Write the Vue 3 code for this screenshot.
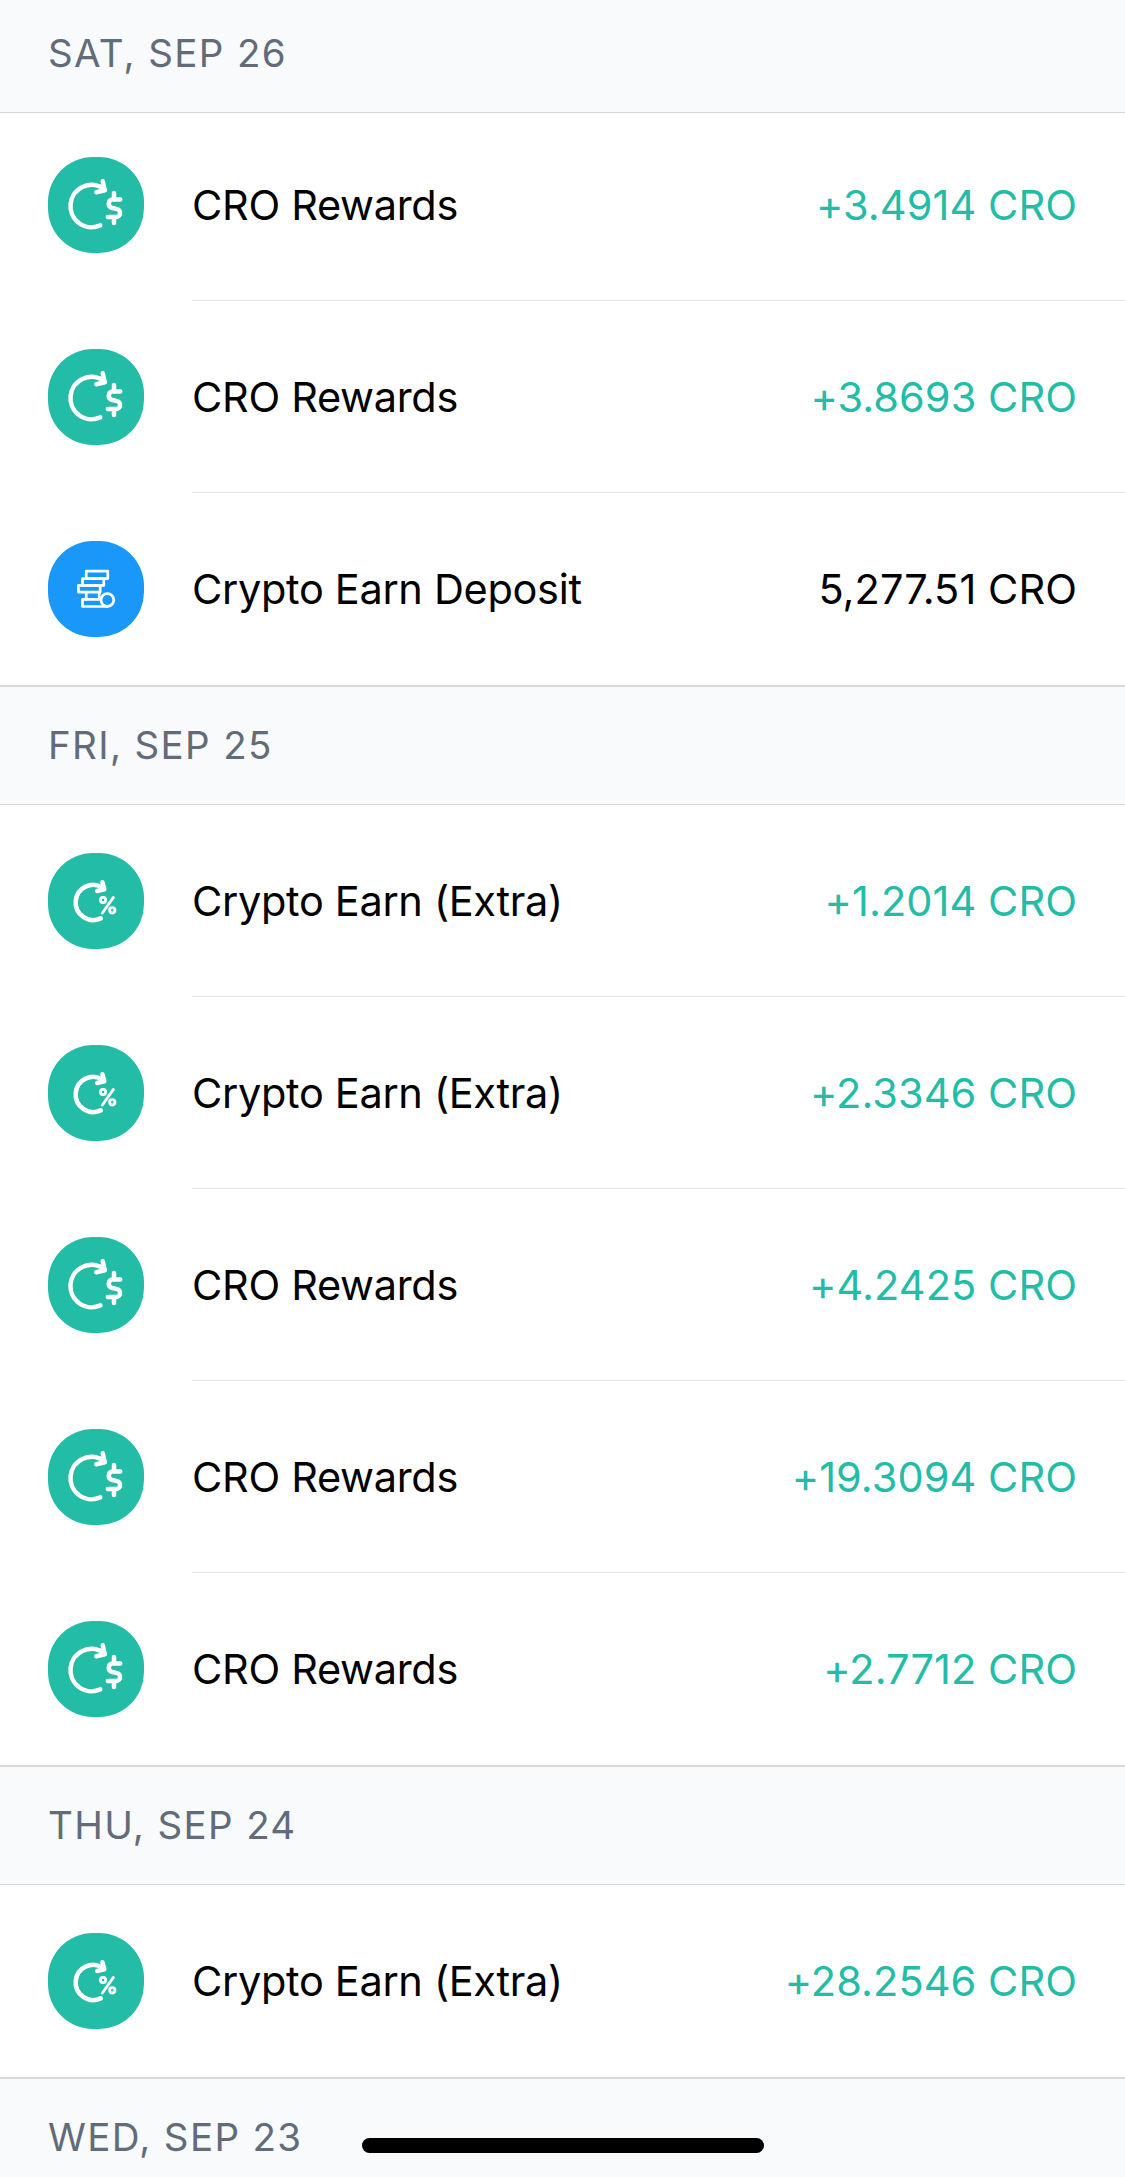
<template>
  <div class="screen">
    <section v-for="group in groups" :key="group.date" class="group">
      <h2 class="group-header">{{ group.date }}</h2>
      <ul class="list">
        <li v-for="(item, i) in group.items" :key="i" class="item">
          <svg class="item-icon" :class="item.type" viewBox="0 0 96 96" fill="none">
            <rect class="badge" width="96" height="96" rx="45" />

            <g v-if="item.type === 'reward'" class="glyph">
              <path d="M52.3 68.4A21.2 21.2 0 1 1 56 31.8" />
              <path d="M54.7 24.2L56.8 33.2L48.3 35.3" />
              <path d="M66 36V42M66 60V66" />
              <path d="M72.3 42.4H64.2A4.4 4.4 0 0 0 63.6 50.8L69 52.1A4 4 0 0 1 68.2 60H59.8" />
            </g>

            <g v-else-if="item.type === 'extra'" class="glyph">
              <path d="M52.7 65.4A17.6 17.6 0 1 1 55 34.8" />
              <path d="M54.4 29.2L56.3 36.3L49.2 38" />
              <g class="percent">
                <circle cx="55" cy="47" r="2.7" />
                <circle cx="64.3" cy="57.3" r="2.7" />
                <path d="M65.4 44.4L54.4 60" />
              </g>
            </g>

            <g v-else class="glyph stack">
              <path d="M38.2 30.2H59.8V37.6H38.2Z" />
              <path d="M34.5 37.6H55.8V44.4H34.5Z" />
              <path d="M30.4 44.4H52.2V51.2H30.4Z" />
              <path d="M38.2 51.2V58.4M51.2 51.2V56" />
              <path d="M53 58.4H34.5V65.5H59.3" />
              <circle class="coin" cx="59.4" cy="59" r="6.4" />
            </g>
          </svg>
          <span class="item-title">{{ titles[item.type] }}</span>
          <span class="item-amount" :class="{ positive: item.type !== 'deposit' }">{{
            item.amount
          }}</span>
        </li>
      </ul>
    </section>
    <div class="home-indicator"></div>
  </div>
</template>

<script setup>
const titles = {
  reward: 'CRO Rewards',
  extra: 'Crypto Earn (Extra)',
  deposit: 'Crypto Earn Deposit',
}

const groups = [
  {
    date: 'SAT, SEP 26',
    items: [
      { type: 'reward', amount: '+3.4914 CRO' },
      { type: 'reward', amount: '+3.8693 CRO' },
      { type: 'deposit', amount: '5,277.51 CRO' },
    ],
  },
  {
    date: 'FRI, SEP 25',
    items: [
      { type: 'extra', amount: '+1.2014 CRO' },
      { type: 'extra', amount: '+2.3346 CRO' },
      { type: 'reward', amount: '+4.2425 CRO' },
      { type: 'reward', amount: '+19.3094 CRO' },
      { type: 'reward', amount: '+2.7712 CRO' },
    ],
  },
  {
    date: 'THU, SEP 24',
    items: [{ type: 'extra', amount: '+28.2546 CRO' }],
  },
  {
    date: 'WED, SEP 23',
    items: [],
  },
]
</script>

<style>
body {
  margin: 0;
  background: #fff;
}
</style>

<style scoped>
.screen {
  position: relative;
  width: 1125px;
  height: 2177px;
  overflow: hidden;
  font-family: Inter, 'Liberation Sans', sans-serif;
  color: #000;
}

.group-header {
  box-sizing: border-box;
  height: 120px;
  margin: 0;
  padding: 0 48px;
  border-top: 2px solid #d6d7d9;
  border-bottom: 1px solid #d6d7d9;
  background: #f9fafc;
  color: #626c79;
  font-size: 38.5px;
  font-weight: 400;
  line-height: 117px;
  letter-spacing: 1.35px;
}

.group:first-child .group-header {
  position: relative;
  z-index: 1;
  margin-top: -7px;
  margin-bottom: -4px;
}

.list {
  margin: 0;
  padding: 0;
  list-style: none;
}

.item {
  display: flex;
  align-items: center;
  height: 192px;
  padding-left: 48px;
}

.item-icon {
  flex: none;
  width: 96px;
  height: 96px;
  margin-right: 48px;
}

.badge {
  fill: #23bca6;
}

.deposit .badge {
  fill: #1998fa;
}

.glyph {
  stroke: #fff;
  stroke-width: 4.5;
  stroke-linecap: round;
  stroke-linejoin: round;
}

.percent {
  stroke-width: 2.8;
}

.stack {
  stroke-width: 2.7;
}

.coin {
  fill: #1998fa;
}

.item-title,
.item-amount {
  height: 192px;
  box-sizing: border-box;
  border-bottom: 1px solid #e9e9ea;
  font-size: 41.5px;
  line-height: 192px;
  white-space: nowrap;
}

.item-title {
  flex: 1;
  letter-spacing: -0.32px;
}

.item-amount {
  padding-right: 48px;
  letter-spacing: 0.06px;
}

.item:last-child .item-title,
.item:last-child .item-amount {
  border-bottom: 0;
}

.positive {
  color: #23bca6;
}

.home-indicator {
  position: absolute;
  left: 50%;
  bottom: 24px;
  width: 402px;
  height: 15px;
  border-radius: 8px;
  background: #000;
  transform: translateX(-50%);
}
</style>
